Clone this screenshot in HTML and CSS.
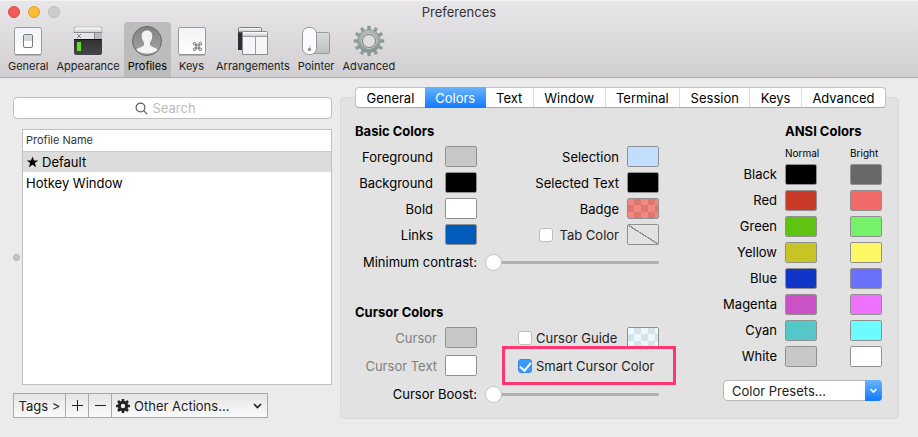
FILE: index.html
```html
<!DOCTYPE html>
<html lang="en">
<head>
<meta charset="utf-8">
<title>Preferences</title>
<link rel="stylesheet" href="styles.css">
</head>
<body>
<header class="header">
  <div class="titlebar">
    <div class="lights">
      <button class="light close" aria-label="Close"></button>
      <button class="light minimize" aria-label="Minimize"></button>
      <button class="light zoom" aria-label="Zoom" disabled></button>
    </div>
    <h1 class="title">Preferences</h1>
  </div>
  <nav class="toolbar">
    <button class="tool">
      <svg width="32" height="32" viewBox="0 0 32 32"><defs><linearGradient id="plate" x2="0" y2="1"><stop offset="0" stop-color="#f2f3f8"/><stop offset="1" stop-color="#fff"/></linearGradient></defs><rect x="2.5" y="2.5" width="27" height="27" rx="2" fill="url(#plate)" stroke="#9a9a9c"/><path d="M3 30h26" stroke="#8b8b8d"/><rect x="11.500" y="9.500" width="9" height="13" rx="1.500" fill="#fff" stroke="#77787b"/><rect x="12" y="10" width="8" height="6" fill="#d5d7dc"/></svg>
      <span>General</span>
    </button>
    <button class="tool">
      <svg width="32" height="32" viewBox="0 0 32 32"><defs><linearGradient id="bar" x2="0" y2="1"><stop offset="0" stop-color="#fff"/><stop offset="1" stop-color="#c4c5c9"/></linearGradient><linearGradient id="dark" x2="0" y2="1"><stop offset="0" stop-color="#202122"/><stop offset="1" stop-color="#464748"/></linearGradient></defs><rect x="2" y="2" width="28" height="28" rx="2" fill="url(#dark)"/><path d="M2 8V4q0-2 2-2h24q2 0 2 2v4z" fill="url(#bar)" stroke="#999" stroke-width=".5"/><path d="M2 8h20v6H2z" fill="#e4e5ea"/><path d="M22 8h8v6h-8z" fill="#b8babf"/><path d="M2 7.500h28M22.500 8v6" stroke="#88898c"/><path d="m5 9 4 4m0-4-4 4" stroke="#777" stroke-width=".9"/><path d="M2 14.500h28" stroke="#111"/><path d="M5 17h4v9H5z" fill="#5ee01c"/></svg>
      <span>Appearance</span>
    </button>
    <button class="tool selected" aria-pressed="true">
      <svg width="32" height="32" viewBox="0 0 32 32"><defs><linearGradient id="disc" x2="0" y2="1"><stop offset="0" stop-color="#828282"/><stop offset="1" stop-color="#a4a4a4"/></linearGradient><clipPath id="round"><circle cx="16" cy="16" r="14"/></clipPath></defs><circle cx="16" cy="16" r="14.500" fill="url(#disc)" stroke="#666"/><path clip-path="url(#round)" d="M16 5.500c-3.700 0-5.500 2.500-5.200 6 .1 2.800 1.200 4.500 2.200 6v2.300c0 2.200-6.200 2.500-7.700 5C7.800 27.500 11.500 28.500 16 28.500s8.200-1 10.700-3.700c-1.500-2.500-7.700-2.800-7.700-5v-2.300c1-1.500 2.100-3.200 2.200-6 .3-3.500-1.500-6-5.200-6z" fill="#f3f3f3"/></svg>
      <span>Profiles</span>
    </button>
    <button class="tool">
      <svg width="32" height="32" viewBox="0 0 32 32"><rect x="2.500" y="2.500" width="27" height="27" rx="2" fill="url(#plate)" stroke="#9a9a9c"/><path d="M3 30h26" stroke="#8b8b8d"/><path d="M20 20h3v3h-3zM20 20h-1.300a1.300 1.300 0 1 1 1.300-1.300zM23 20v-1.300a1.300 1.300 0 1 1 1.300 1.300zM23 23h1.300a1.300 1.300 0 1 1-1.300 1.300zM20 23v1.300a1.300 1.300 0 1 1-1.300-1.300z" fill="none" stroke="#66676b" stroke-width="1"/></svg>
      <span>Keys</span>
    </button>
    <button class="tool">
      <svg width="32" height="32" viewBox="0 0 32 32"><path d="M1 3h23v22H1z" fill="#2e2f31"/><path d="M1.500 7V3.500q0-1 1-1h21q1 0 1 1V7z" fill="url(#bar)" stroke="#7c7d80"/><path d="M5.500 29.500v-22q0-1 1-1h23q1 0 1 1v22z" fill="#f5f6fa" stroke="#8a8b8e"/><path d="M6 11.500V8q0-1 1-1h22q1 0 1 1v3.500z" fill="url(#bar)"/><path d="M6 11.500h24M18.500 12v17" stroke="#9b9c9f"/></svg>
      <span>Arrangements</span>
    </button>
    <button class="tool">
      <svg width="32" height="32" viewBox="0 0 32 32"><defs><linearGradient id="pad" x2="0" y2="1"><stop offset="0" stop-color="#dadddf"/><stop offset="1" stop-color="#b9bebf"/></linearGradient></defs><rect x="10.500" y="7.500" width="19" height="21" rx="1" fill="url(#pad)" stroke="#999c9e"/><rect x="2.500" y="2.500" width="14" height="27" rx="6" fill="#fafbff" stroke="#949598"/><circle cx="9.500" cy="24.500" r="1.700" fill="#939599"/><path d="M9.500 22.500 11 21" stroke="#939599"/></svg>
      <span>Pointer</span>
    </button>
    <button class="tool">
      <svg width="32" height="32" viewBox="-16 -16 32 32"><defs><linearGradient id="steel" x2="0" y2="1"><stop offset="0" stop-color="#b0b8b9"/><stop offset="1" stop-color="#8d9697"/></linearGradient></defs><g fill="#949d9d" stroke="#7a8384" stroke-width=".4"><path id="tooth" d="M-1.700-10-1.200-15h2.400l.5 5zM-1.700 10-1.200 15h2.400l.5-5z"/><use href="#tooth" transform="rotate(30)"/><use href="#tooth" transform="rotate(60)"/><use href="#tooth" transform="rotate(90)"/><use href="#tooth" transform="rotate(120)"/><use href="#tooth" transform="rotate(150)"/></g><circle r="9" fill="none" stroke="#7c8586" stroke-width="5"/><circle r="9" fill="none" stroke="url(#steel)" stroke-width="4"/><circle r="7.500" fill="none" stroke="#c7cccc"/><circle r="6.500" fill="#dedde0" stroke="#7c8485"/></svg>
      <span>Advanced</span>
    </button>
  </nav>
</header>
<main class="content">
  <section class="sidebar">
    <label class="search">
      <svg width="13" height="13" viewBox="0 0 13 13" fill="none" stroke="#5c5c5c" stroke-width="1.200"><circle cx="5.500" cy="5.500" r="4.400"/><path d="m8.700 8.700 3.500 3.500"/></svg>
      <input type="search" placeholder="Search" aria-label="Search">
    </label>
    <div class="listrow">
      <span class="grip"></span>
      <div class="list">
        <table class="profiles">
          <thead><tr><th>Profile Name</th></tr></thead>
          <tbody>
            <tr class="current"><td><svg width="13" height="12" viewBox="0 0 13 12"><path d="m6.500.5 1.500 4h4.200L8.900 7.100l1.200 4.100-3.600-2.500-3.600 2.500 1.200-4.100L.8 4.500H5z"/></svg>Default</td></tr>
            <tr><td>Hotkey Window</td></tr>
          </tbody>
        </table>
      </div>
    </div>
    <div class="actions">
      <button class="tags">Tags &gt;</button>
      <button class="square" aria-label="Add profile"><svg width="12" height="12" viewBox="0 0 12 12"><path d="M6.500 0v11M1 5.500h11" stroke="#222"/></svg></button>
      <button class="square" aria-label="Remove profile"><svg width="12" height="12" viewBox="0 0 12 12"><path d="M1 5.500h11" stroke="#222"/></svg></button>
      <button class="other"><svg width="14" height="14" viewBox="-7 -7 14 14"><circle r="3.700" fill="none" stroke="#222" stroke-width="3"/><path d="M0-7v3M0 7V4M-7 0h3M7 0H4M-5-5l2 2M5-5 3-3M5 5 3 3M-5 5l2-2" stroke="#222" stroke-width="2.600"/></svg><span>Other Actions...</span><svg class="chevron" width="9" height="6" viewBox="0 0 9 6"><path d="m1 1 3.500 3.500L8 1" fill="none" stroke="#222" stroke-width="1.700"/></svg></button>
    </div>
  </section>
  <section class="details">
    <nav class="tabs">
      <button>General</button><button class="active">Colors</button><button>Text</button><button>Window</button><button>Terminal</button><button>Session</button><button>Keys</button><button>Advanced</button>
    </nav>
    <div class="panel">
      <div class="groups">
        <h2>Basic Colors</h2>
        <div class="wells">
          <label class="name" for="fg">Foreground</label><input type="color" id="fg" value="#c7c7c7">
          <label for="sel">Selection</label><input type="color" id="sel" value="#c1deff">
          <label class="name" for="bg">Background</label><input type="color" id="bg" value="#000000">
          <label for="seltext">Selected Text</label><input type="color" id="seltext" value="#000000">
          <label class="name" for="bold">Bold</label><input type="color" id="bold" value="#ffffff">
          <label for="badge">Badge</label><input type="color" id="badge" class="badge" value="#f28880">
          <label class="name" for="links">Links</label><input type="color" id="links" value="#005bbb">
          <label class="check"><input type="checkbox">Tab Color</label><input type="color" class="none" aria-label="Tab color" value="#e2e2e2">
        </div>
        <div class="slider"><label for="contrast">Minimum contrast:</label><input type="range" id="contrast" value="0"></div>
        <h2>Cursor Colors</h2>
        <div class="wells cursor">
          <label class="dim" for="cursor">Cursor</label><input type="color" id="cursor" value="#c7c7c7" disabled>
          <label class="check start"><input type="checkbox">Cursor Guide</label><input type="color" class="guide" aria-label="Cursor guide color" value="#ebf8fe">
          <label class="dim" for="cursortext">Cursor Text</label><input type="color" id="cursortext" value="#ffffff" disabled>
          <label class="check start marked"><input type="checkbox" checked>Smart Cursor Color</label>
        </div>
        <div class="slider"><label for="boost">Cursor Boost:</label><input type="range" id="boost" value="0"></div>
      </div>
      <div class="ansi">
        <h2>ANSI Colors</h2>
        <table>
          <thead><tr><td></td><th>Normal</th><th>Bright</th></tr></thead>
          <tbody>
            <tr><th>Black</th><td><input type="color" aria-label="Black normal" value="#000000"></td><td><input type="color" aria-label="Black bright" value="#686868"></td></tr>
            <tr><th>Red</th><td><input type="color" aria-label="Red normal" value="#c93a28"></td><td><input type="color" aria-label="Red bright" value="#f16a67"></td></tr>
            <tr><th>Green</th><td><input type="color" aria-label="Green normal" value="#5fc411"></td><td><input type="color" aria-label="Green bright" value="#75f16a"></td></tr>
            <tr><th>Yellow</th><td><input type="color" aria-label="Yellow normal" value="#c7c425"></td><td><input type="color" aria-label="Yellow bright" value="#fff766"></td></tr>
            <tr><th>Blue</th><td><input type="color" aria-label="Blue normal" value="#1036c8"></td><td><input type="color" aria-label="Blue bright" value="#6a71fc"></td></tr>
            <tr><th>Magenta</th><td><input type="color" aria-label="Magenta normal" value="#cb51c7"></td><td><input type="color" aria-label="Magenta bright" value="#ee72fe"></td></tr>
            <tr><th>Cyan</th><td><input type="color" aria-label="Cyan normal" value="#56c7c8"></td><td><input type="color" aria-label="Cyan bright" value="#6cfbff"></td></tr>
            <tr><th>White</th><td><input type="color" aria-label="White normal" value="#c7c7c7"></td><td><input type="color" aria-label="White bright" value="#ffffff"></td></tr>
          </tbody>
        </table>
        <div class="presets">
          <select aria-label="Color Presets"><option>Color Presets...</option></select>
          <svg width="17" height="21" viewBox="0 0 17 21"><path d="m5.500 9 3 3 3-3" fill="none" stroke="#fff" stroke-width="1.600"/></svg>
        </div>
      </div>
    </div>
  </section>
</main>
</body>
</html>
```
FILE: styles.css
```css
* { box-sizing: border-box; }
body {
  margin: 0;
  min-height: 100vh;
  background: #ebebeb;
  color: #000;
  font: 13px/16px Inter, "Liberation Sans", sans-serif;
}
button, input, select { font: inherit; color: inherit; margin: 0; }
button { border: 0; padding: 0; background: none; }
h1, h2 { margin: 0; font-size: 13px; }
svg { display: block; flex: none; }

.header {
  background: linear-gradient(#e8e6e8, #d1cfd1);
  border-top: 1px solid #f4f3f4;
  border-bottom: 1px solid #acacac;
}
.titlebar { display: grid; grid-template-columns: 1fr auto 1fr; align-items: center; height: 21px; }
.lights { display: flex; gap: 8px; padding-left: 8px; }
.light { width: 12px; height: 12px; border-radius: 50%; border: 1px solid; }
.close { background: #f35b56; border-color: #dd4b47; }
.minimize { background: #fbbd31; border-color: #dea031; }
.zoom { background: #cecdce; border-color: #bdbcbd; }
.title { font-weight: 400; color: #333; }
.toolbar { display: flex; padding-left: 4px; }
.tool {
  display: flex; flex-direction: column; align-items: center; gap: 1px;
  min-width: 41px; padding: 3px 4px; height: 55px;
  border-radius: 4px 4px 0 0; font-size: 11px; line-height: 16px; color: #222;
}
.selected { background: #bdbcbd; color: #000; }

.content { display: flex; align-items: flex-start; gap: 8px; padding: 9px 19px 19px 13px; }
.sidebar { flex: 0 1 319px; padding-top: 10px; }
.search {
  display: flex; align-items: center; justify-content: center; gap: 5px;
  height: 22px; background: #fff; border: 1px solid #bfbfbf; border-radius: 4px;
}
.search input { width: 58px; border: 0; padding: 0; outline: 0; background: none; appearance: none; }
.search input::-webkit-search-cancel-button { display: none; }
.search input::placeholder { color: #bcbcbc; }
.listrow { display: flex; align-items: center; gap: 2px; margin-top: 10px; }
.grip { width: 7px; height: 7px; border-radius: 50%; background: #c4c4c4; border: 1px solid #b0b0b0; }
.list { flex: 1; height: 256px; background: #fff; border: 1px solid #c0c0c0; }
.profiles { width: 100%; border-collapse: collapse; }
.profiles th { height: 21px; padding: 0 3px; text-align: left; font-size: 11px; font-weight: 400; color: #333; border-bottom: 1px solid #ccc; }
.profiles td { height: 21px; padding: 0 3px; }
.profiles svg { display: inline-block; margin-right: 3px; vertical-align: -1px; }
.current { background: #dcdcdc; }
.actions {
  display: inline-flex; margin-top: 8px; height: 25px;
  border: 1px solid #a9a9a9; background: linear-gradient(#e5e5e5, #fafafa); color: #222;
}
.actions button { display: flex; align-items: center; justify-content: center; }
.actions button + button { border-left: 1px solid #a9a9a9; }
.tags { width: 51px; }
.square { width: 23px; }
.other { width: 156px; padding: 0 5px 0 4px; gap: 4px; }
.chevron { margin-left: auto; }

.details { flex: 1 1 0; display: flex; flex-direction: column; }
.tabs {
  display: flex; position: relative; z-index: 1; height: 21px; margin: 0 13px 0 15px;
  border: 1px solid #c2c2c2; border-bottom-color: #acacac; border-radius: 4px; background: #fff;
}
.tabs button { flex: auto; padding: 0 10px; border-left: 1px solid #ddd; }
.tabs button:first-child, .tabs .active, .tabs .active + button { border-left: 0; }
.tabs .active { background: linear-gradient(#6bb3fa, #0f7bff); color: #fff; margin: -1px 0; }
.panel {
  display: flex; justify-content: space-between; margin-top: -11px;
  padding: 25px 16px 15px 14px; background: #e2e2e2; border: 1px solid #d8d8d8; border-radius: 4px;
}
.groups { flex: 0 1 304px; }
.wells {
  display: grid; grid-template-columns: 82px 32px 1fr 32px; column-gap: 8px; row-gap: 5px;
  align-items: center; justify-items: end; margin-top: 7px;
}
.name { padding-right: 4px; }
.dim { color: #7f7f7f; }
input[type="color"] {
  display: block; width: 32px; height: 21px; padding: 0; border: 1px solid #909090;
  border-radius: 2px; background: none; appearance: none; overflow: hidden;
}
::-webkit-color-swatch-wrapper { padding: 0; }
::-webkit-color-swatch { border: 0; border-radius: 0; }
.badge::-webkit-color-swatch { background: conic-gradient(#df7670 25%, #f28880 0 50%, #df7670 0 75%, #f28880 0) -1px -1px / 14px 14px; }
.guide::-webkit-color-swatch { background: conic-gradient(#d6e3e8 25%, #ebf8fe 0 50%, #d6e3e8 0 75%, #ebf8fe 0) -1px -1px / 14px 14px; }
.none::-webkit-color-swatch { background: linear-gradient(to top right, transparent 48%, #909090 48% 52%, transparent 52%); }
.check { display: flex; align-items: center; gap: 7px; color: #222; }
.check input {
  width: 14px; height: 14px; appearance: none; background: #fff;
  border: 1px solid #bdbdbd; border-radius: 3px;
}
.check input:checked { display: grid; place-items: center; background: #3b99fc; border-color: #3389ea; }
.check input:checked::after {
  content: ""; width: 5px; height: 9px; margin-bottom: 2px;
  border: solid #fff; border-width: 0 2px 2px 0; transform: rotate(40deg);
}
.start { justify-self: start; margin-left: 33px; gap: 4px; }
.marked { position: relative; grid-column: 3 / 5; white-space: nowrap; }
.marked::before { content: ""; position: absolute; inset: -12px -22px -11px -16px; border: 3px solid #ff3670; }
.cursor { row-gap: 7px; padding-bottom: 1px; }
.slider { display: flex; align-items: center; justify-content: flex-end; gap: 8px; height: 18px; margin-top: 8px; }
.slider input { width: 174px; height: 18px; appearance: none; background: none; }
.slider input::-webkit-slider-runnable-track { height: 3px; border-radius: 2px; background: #b0b0b0; }
.slider input::-webkit-slider-thumb {
  appearance: none; width: 17px; height: 17px; margin-top: -7px; border-radius: 50%;
  background: #fff; border: 1px solid #c3c3c3;
}
.slider + h2 { margin-top: 33px; }

.ansi { flex: 0 0 159px; }
.ansi h2 { padding-left: 62px; }
.ansi table { width: 100%; margin-top: 6px; border-collapse: collapse; }
.ansi td, .ansi th { padding: 0; font-weight: 400; }
.ansi thead th { height: 16px; width: 65px; text-align: left; font-size: 10px; line-height: 16px; }
.ansi thead th:last-child { width: 32px; }
.ansi tbody tr { height: 26px; }
.ansi tbody th { text-align: right; padding-right: 8px; }
.presets { position: relative; margin-top: 11px; }
.presets select {
  display: block; width: 100%; height: 21px; padding: 0 8px; appearance: none; color: #222;
  border: 1px solid #b8b8b8; border-radius: 4px; background: #fff;
}
.presets svg { position: absolute; right: 0; top: 0; border-radius: 0 4px 4px 0; background: linear-gradient(#6bb3fa, #0f7bff); pointer-events: none; }
```
